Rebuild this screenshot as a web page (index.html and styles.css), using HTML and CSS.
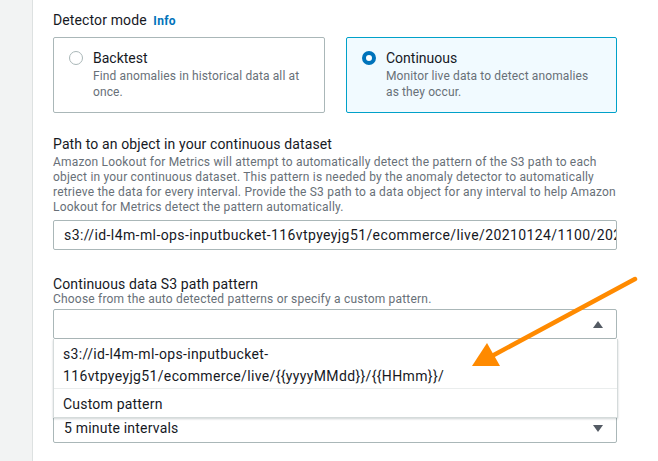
FILE: index.html
```html
<!DOCTYPE html>
<html lang="en">
<head>
<meta charset="utf-8">
<title>Detector mode</title>
<link rel="stylesheet" href="styles.css">
</head>
<body>
<div class="page">
  <aside class="sidebar"></aside>
  <main class="main">
    <div class="field-label mode-label">Detector mode <a class="info">Info</a></div>
    <div class="cards">
      <div class="card">
        <span class="radio"></span>
        <div class="card-text">
          <div class="card-title">Backtest</div>
          <div class="card-desc">Find anomalies in historical data all at once.</div>
        </div>
      </div>
      <div class="card card-selected">
        <span class="radio radio-checked"></span>
        <div class="card-text">
          <div class="card-title">Continuous</div>
          <div class="card-desc">Monitor live data to detect anomalies as they occur.</div>
        </div>
      </div>
    </div>

    <div class="field field-path">
      <div class="field-label">Path to an object in your continuous dataset</div>
      <div class="field-desc">Amazon Lookout for Metrics will attempt to automatically detect the pattern of the S3 path to each object in your continuous dataset. This pattern is needed by the anomaly detector to automatically retrieve the data for every interval. Provide the S3 path to a data object for any interval to help Amazon Lookout for Metrics detect the pattern automatically.</div>
      <div class="input">s3://id-l4m-ml-ops-inputbucket-116vtpyeyjg51/ecommerce/live/20210124/1100/20210124_110000_ecommerce.csv</div>
    </div>

    <div class="field field-pattern">
      <div class="field-label pattern-label">Continuous data S3 path pattern</div>
      <div class="field-desc desc-tight">Choose from the auto detected patterns or specify a custom pattern.</div>
      <div class="select-wrap">
        <div class="select"><span class="select-value"></span><span class="caret caret-up"></span></div>
        <ul class="dropdown">
          <li class="option">s3://id-l4m-ml-ops-inputbucket-116vtpyeyjg51/ecommerce/live/{{yyyyMMdd}}/{{HHmm}}/</li>
          <li class="option">Custom pattern</li>
        </ul>
      </div>
    </div>

    <div class="field field-interval">
      <div class="select"><span class="select-value">5 minute intervals</span><span class="caret caret-down"></span></div>
    </div>
  </main>
  <svg class="arrow" width="658" height="461" viewBox="0 0 658 461">
    <line x1="635" y1="279" x2="492" y2="356" stroke="#ff8a00" stroke-width="4.5" stroke-linecap="round"/>
    <polygon points="472,366 487,343 500,366" fill="#ff8a00"/>
  </svg>
</div>
</body>
</html>
```

FILE: styles.css
```css
* { box-sizing: border-box; }
html, body { margin: 0; padding: 0; background: #fff; }
body {
  font-family: Roboto, "Liberation Sans", sans-serif;
  color: #16191f;
  width: 658px;
  height: 461px;
  overflow: hidden;
}
.page {
  display: flex;
  width: 658px;
  height: 461px;
  position: relative;
  overflow: hidden;
}
.sidebar {
  width: 33px;
  flex: none;
  background: #f2f3f3;
  border-right: 1px solid #dde1e1;
}
.main {
  flex: 1;
  min-width: 0;
  padding: 9px 41px 0 20px;
}
.field-label {
  font-size: 14px;
  line-height: 20px;
  letter-spacing: 0.12px;
  color: #16191f;
}
.mode-label { line-height: 22px; }
.info {
  font-size: 12px;
  font-weight: 700;
  letter-spacing: 0.3px;
  color: #0073bb;
  margin-left: 3px;
}
.cards {
  display: grid;
  grid-template-columns: 272px 271px;
  gap: 21px;
  margin-top: 5px;
}
.card {
  display: flex;
  align-items: flex-start;
  height: 76px;
  border: 1px solid #aab7b8;
  border-radius: 2px;
  padding: 10px 18px 12px 15px;
}
.card-selected {
  background: #f1faff;
  border-color: #00a1c9;
}
.radio {
  flex: none;
  width: 14px;
  height: 14px;
  border-radius: 50%;
  border: 1.5px solid #aab7b8;
  background: #fff;
  margin-top: 3px;
  margin-right: 10px;
}
.radio-checked {
  border: 4px solid #0073bb;
}
.card-title {
  font-size: 14px;
  line-height: 20px;
}
.card-desc {
  font-size: 12px;
  line-height: 16px;
  letter-spacing: 0.12px;
  color: #687078;
}
.field-path { margin-top: 21px; }
.field-desc {
  font-size: 12px;
  line-height: 15px;
  letter-spacing: 0.2px;
  color: #687078;
  margin-top: 1px;
  margin-right: -6px;
}
.pattern-label { line-height: 16px; }
.desc-tight { line-height: 14px; margin-top: 0; }
.input {
  margin-top: 5px;
  height: 30px;
  border: 1px solid #aab7b8;
  border-radius: 2px;
  padding: 0 5px 0 10px;
  font-size: 14px;
  line-height: 28px;
  letter-spacing: 0.4px;
  white-space: nowrap;
  overflow: hidden;
}
.field-pattern { margin-top: 26px; }
.select-wrap {
  position: relative;
  margin-top: 3px;
}
.select {
  height: 30px;
  border: 1px solid #aab7b8;
  border-radius: 2px;
  padding: 0 13px 0 10px;
  display: flex;
  align-items: center;
  justify-content: space-between;
  font-size: 14px;
  letter-spacing: 0.2px;
  background: #fff;
}
.caret {
  width: 0;
  height: 0;
  border-left: 5px solid transparent;
  border-right: 5px solid transparent;
}
.caret-up { border-bottom: 7px solid #545b64; }
.caret-down { border-top: 7px solid #545b64; }
.dropdown {
  position: absolute;
  top: 100%;
  left: 0;
  right: -1px;
  margin: 0;
  padding: 0;
  list-style: none;
  background: #fff;
  border: 1px solid #d5dbdb;
  border-top: none;
  box-shadow: 0 1px 2px rgba(0, 28, 36, 0.2);
  z-index: 2;
}
.option {
  font-size: 14px;
  line-height: 22px;
  letter-spacing: 0.35px;
  padding: 4px 10px 1px 9px;
}
.option + .option {
  border-top: 1px solid #eaeded;
  padding-bottom: 2px;
  letter-spacing: 0.2px;
}
.field-interval { margin-top: 74px; }
.arrow {
  position: absolute;
  left: 0;
  top: 0;
  pointer-events: none;
  z-index: 5;
}
```
